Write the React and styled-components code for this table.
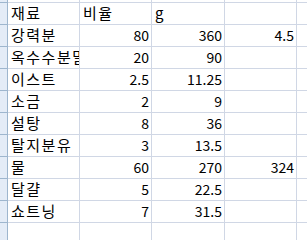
import React from "react";
import styled, { createGlobalStyle } from "styled-components";

const GlobalStyle = createGlobalStyle`
  html, body {
    margin: 0;
    padding: 0;
    background: #ffffff;
  }
  body {
    font-family: "Noto Sans CJK KR", "Noto Sans", sans-serif;
    overflow: hidden;
  }
`;

const rows = [
  ["재료", "비율", "g", ""],
  ["강력분", "80", "360", "4.5"],
  ["옥수수분말", "20", "90", ""],
  ["이스트", "2.5", "11.25", ""],
  ["소금", "2", "9", ""],
  ["설탕", "8", "36", ""],
  ["탈지분유", "3", "13.5", ""],
  ["물", "60", "270", "324"],
  ["달걀", "5", "22.5", ""],
  ["쇼트닝", "7", "31.5", ""],
  ["", "", "", ""],
  ["", "", "", ""],
];

export default function App() {
  return (
    <>
      <GlobalStyle />
      <Sheet>
        <Row $height={3}>
          <RowHead />
          <Cell />
          <Cell />
          <Cell />
          <Cell />
          <Cell $last />
        </Row>
        {rows.map((r, i) => (
          <Row key={i} $height={22}>
            <RowHead />
            {r.map((v, j) => {
              const numeric = v !== "" && !isNaN(Number(v));
              return (
                <Cell key={j} $numeric={numeric}>
                  {v}
                </Cell>
              );
            })}
            <Cell $last />
          </Row>
        ))}
      </Sheet>
    </>
  );
}

const Sheet = styled.div`
  width: 307px;
  height: 240px;
  overflow: hidden;
  display: flex;
  flex-direction: column;
`;

const Row = styled.div`
  display: grid;
  grid-template-columns: 8px 72px 72px 73px 72px 1fr;
  height: ${(p) => p.$height}px;
  flex-shrink: 0;
`;

const RowHead = styled.div`
  box-sizing: border-box;
  background: #e4ecf7;
  border-right: 1px solid #9eb6ce;
  border-bottom: 1px solid #9eb6ce;
`;

const Cell = styled.div`
  box-sizing: border-box;
  border-right: ${(p) => (p.$last ? "none" : "1px solid #d0d7e5")};
  border-bottom: 1px solid #d0d7e5;
  display: flex;
  align-items: flex-end;
  justify-content: ${(p) => (p.$numeric ? "flex-end" : "flex-start")};
  padding: 0 2px 1px 3px;
  font-size: ${(p) => (p.$numeric ? "14px" : "15px")};
  letter-spacing: ${(p) => (p.$numeric ? "0" : "1.5px")};
  line-height: 20px;
  color: #000000;
  white-space: nowrap;
  overflow: hidden;
`;
